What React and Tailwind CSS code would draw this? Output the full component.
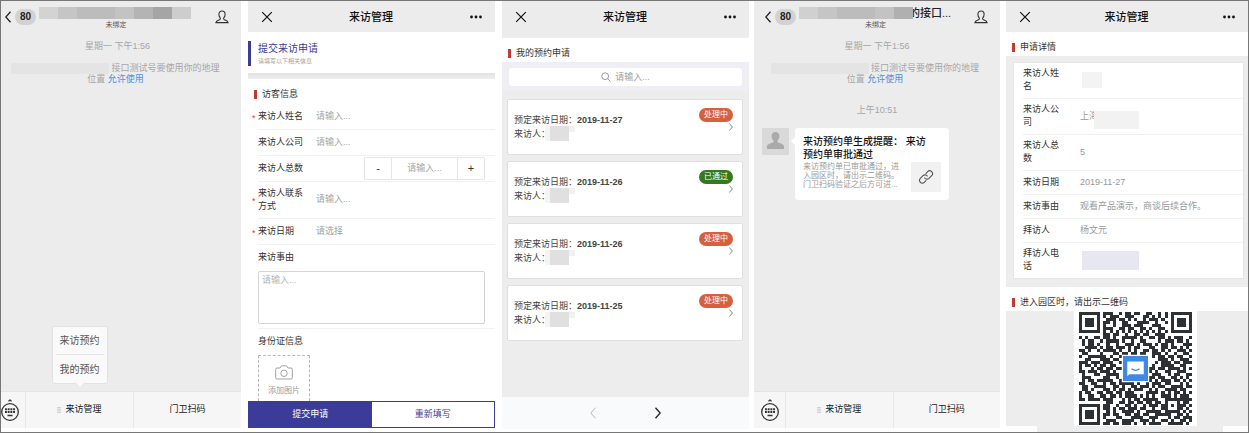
import React from "react";

const QR_ROWS = [
  "00E5B32D00", "00B9C6A900", "0076A5D300", "00D31E4A00", "0093B8E500", "00E6CD3200", "00AAAAAA00", "00D9367200",
  "A6D3E9B5C8", "5B7A4C2ED0", "5A49D75A38", "3D6EB19B50", "D2F4A6D4E8", "631B6CE930", "9DA4E2B6C8", "33D9063A70",
  "ECE7025DB8", "B5B2009E60", "896E03B7A8", "DDD3014CE0", "467A02E598", "72C903B350", "59E6A95DA8", "CCB7D2EC50",
  "659A6EB3D8", "6AD6B94F60", "B36DC3D5A8", "99B5EA9D70", "DCE2B7CAF8", "0066DB6A30", "00C9A5D7E8", "00D6EC9B50",
  "0053D3E6A8", "00D9B67CD0", "008C79C5B8", "0073CE9A68", "00DBA5E7D0",
];

function finderModule(x, y) {
  const ring = Math.max(Math.abs(x - 3), Math.abs(y - 3));
  return ring === 3 || ring <= 1;
}

function moduleOn(x, y) {
  if (x < 8 && y < 8) return x < 7 && y < 7 && finderModule(x, y);
  if (x > 28 && y < 8) return x > 29 && y < 7 && finderModule(x - 30, y);
  if (x < 8 && y > 28) return x < 7 && y > 29 && finderModule(x, y - 30);
  if (y === 6) return x % 2 === 0;
  if (x === 6) return y % 2 === 0;
  const a = Math.max(Math.abs(x - 30), Math.abs(y - 30));
  if (a <= 2) return a !== 1;
  const digit = parseInt(QR_ROWS[y][x >> 2], 16);
  return ((digit >> (3 - (x & 3))) & 1) === 1;
}

function QrCode() {
  let d = "";
  for (let y = 0; y < 37; y++) {
    for (let x = 0; x < 37; x++) if (moduleOn(x, y)) d += `M${x} ${y}h1v1h-1z`;
  }
  return (
    <svg viewBox="0 0 37 37" className="block w-[113px]" role="img" aria-label="二维码">
      <path d={d} fill="#2e3133" shapeRendering="crispEdges" />
      <rect x="14" y="14" width="9" height="9" fill="#fff" />
      <rect x="14.4" y="14.4" width="8.2" height="8.2" fill="#3f88e4" />
      <path d="M15.8 16.2h5.4v4.2h-4.7l-.7.6z" fill="#fff" />
      <path d="M17.2 18.6q1.3 1 2.6 0" fill="none" stroke="#3f88e4" strokeWidth=".45" />
    </svg>
  );
}

function Chevron({ left, className }) {
  return (
    <svg viewBox="0 0 6 12" fill="none" stroke="currentColor" className={className} aria-hidden="true">
      <path d={left ? "M5.5.7.8 6l4.7 5.3" : "M.5.7 5.2 6 .5 11.3"} />
    </svg>
  );
}

function Mosaic({ colors }) {
  return (
    <span className="relative z-10 flex h-3">
      {colors.map((c, i) => (
        <span key={i} className="w-[19px]" style={{ backgroundColor: c }} />
      ))}
    </span>
  );
}

function ChatHeader({ colors, title }) {
  return (
    <header className="flex h-8 items-start pl-[11px] pr-3 text-[#222]">
      <button aria-label="返回" className="mt-[10px]">
        <Chevron left className="h-3 w-[6px] stroke-[1.3px]" />
      </button>
      <span className="ml-1 mt-2 h-4 w-[21px] rounded-full bg-[#d2d2d2] text-center text-[10px] font-bold leading-4">80</span>
      <div className="ml-[3px] flex-1">
        <div className="flex h-[19px] items-center pt-[5px]">
          <Mosaic colors={colors} />
          {title && <h2 className="-ml-1 whitespace-nowrap text-[11px] font-medium leading-3">{title}</h2>}
        </div>
        <p className="mr-[22px] text-center text-[7px] leading-[9px] text-[#555]">未绑定</p>
      </div>
      <button aria-label="公众号资料" className="mt-[9px]">
        <svg viewBox="0 0 14 14" className="size-[14px]" fill="none" stroke="#333" strokeWidth="1.1">
          <path d="M5.4 8.2C4.4 7.2 3.9 5.700 3.9 4.200 3.900 2.200 5.200 1 7 1s3.100 1.200 3.100 3.200c0 1.500-.5 3-1.500 4-.2 1 .3 1.400 1.300 1.800 1.600.6 2.900 1 3.200 2.600H.9C1.200 11 2.500 10.600 4.100 10c1-.4 1.500-.8 1.300-1.800z" />
        </svg>
      </button>
    </header>
  );
}

function LocationNotice() {
  return (
    <div className="text-center text-[9px] text-[#a6a6a6]">
      <p className="mt-[7px] leading-3">星期一 下午1:56</p>
      <p className="mt-[11px] whitespace-nowrap pr-1 leading-[11px]">
        <span className="mr-[2px] inline-block h-[11px] w-[98px] bg-[#e4e4e4] align-top" />
        接口测试号要使用你的地理
        <br />
        位置 <a href="#allow" className="text-[#4a8fe0]">允许使用</a>
      </p>
    </div>
  );
}

function ChatFooter({ menuOpen }) {
  return (
    <footer className="mt-auto flex h-[37px] border-t border-[#e4e4e4] bg-[#f6f6f6] text-[9px] text-[#222]">
      <button aria-label="键盘" className="flex w-8 items-center justify-center border-r border-[#e8e8e8]">
        <svg viewBox="0 0 20 24" className="h-6 w-5" fill="none" stroke="#333">
          <circle cx="10" cy="14" r="8.300" strokeWidth="1.3" />
          <path d="M8.300 3 10 1.500 11.700 3z" fill="#333" strokeWidth=".6" />
          <path d="M5 11.300h10M5 14h10" strokeWidth="1.900" strokeDasharray="1.900 .8" />
          <path d="M7.500 17.500h5" strokeWidth="1.500" />
        </svg>
      </button>
      <div className="relative flex flex-1 border-r border-[#e8e8e8]">
        <button className="flex flex-1 items-center justify-center gap-1">
          <svg viewBox="0 0 4 6" className="h-[6px] w-1" stroke="#aaa" strokeWidth=".7">
            <path d="M0 .8h4M0 3h4M0 5.200h4" />
          </svg>
          来访管理
        </button>
        {menuOpen && (
          <div className="absolute bottom-full left-1/2 mb-2 w-14 -translate-x-1/2 rounded-[3px] border border-[#e2e2e2] bg-[#fafafa] px-[3px] text-[10px] text-[#555]">
            <button className="block h-7 w-full border-b border-[#e4e4e4]">来访预约</button>
            <button className="block h-7 w-full">我的预约</button>
            <svg viewBox="0 0 8 5" className="absolute left-1/2 top-full h-[5px] w-2 -translate-x-1/2">
              <path d="M0 0h8L4 4z" fill="#fafafa" />
            </svg>
          </div>
        )}
      </div>
      <button className="flex-1">门卫扫码</button>
    </footer>
  );
}

function PageHeader() {
  return (
    <header className="flex h-[31px] items-center justify-between bg-[#ececec] pl-[13px] pr-3 pt-[1px] text-[#111]">
      <button aria-label="关闭">
        <svg viewBox="0 0 12 12" className="size-3" stroke="currentColor" strokeWidth="1.2">
          <path d="m1.200 1.200 9.600 9.600M10.800 1.200l-9.600 9.600" />
        </svg>
      </button>
      <h2 className="text-[11px] font-medium">来访管理</h2>
      <button aria-label="更多">
        <svg viewBox="0 0 14 12" className="h-3 w-[14px]" fill="currentColor">
          <circle cx="2.500" cy="6" r="1.400" />
          <circle cx="7" cy="6" r="1.400" />
          <circle cx="11.500" cy="6" r="1.400" />
        </svg>
      </button>
    </header>
  );
}

function SectionTitle({ children }) {
  return (
    <h3 className="flex h-6 items-center gap-[5px] bg-white pl-[6px] pt-[6px] text-[9px] leading-3 text-[#333]">
      <span className="h-[9px] w-[3px] bg-[#c03a34]" />
      {children}
    </h3>
  );
}

function FormRow({ id, label, required, tall, children }) {
  return (
    <div className={`ml-[10px] flex items-center border-b border-[#f1f1f1] ${tall ? "h-[37px]" : "h-[26px]"}`}>
      <label htmlFor={id} className="relative w-[58px] pr-3 leading-[13px]">
        {required && <span className="absolute -left-[6px] top-1/2 -translate-y-1/2 pt-[2px] text-[#e8392f]">*</span>}
        {label}
      </label>
      {children}
    </div>
  );
}

const INPUT = "min-w-0 flex-1 bg-transparent outline-none placeholder:text-[#a6a6a6]";

function RequestForm() {
  return (
    <form className="flex flex-1 flex-col" onSubmit={(e) => e.preventDefault()}>
      <div className="mt-[9px] flex h-[25px] border-l-[3px] border-[#3b3c97] pl-[7px]">
        <div>
          <h3 className="text-[10px] leading-4 text-[#3b3c97]">提交来访申请</h3>
          <p className="text-[6px] leading-[8px] text-[#a0a0a0]">请填写以下相关信息</p>
        </div>
      </div>
      <div className="mt-[7px] h-[6px] bg-linear-to-b from-[#e2e2e2] to-[#eeeeee]" />
      <SectionTitle>访客信息</SectionTitle>
      <div className="pt-[1px] text-[9px] text-[#333]">
        <FormRow id="name" label="来访人姓名" required>
          <input id="name" className={INPUT} placeholder="请输入..." />
        </FormRow>
        <FormRow id="company" label="来访人公司">
          <input id="company" className={INPUT} placeholder="请输入..." />
        </FormRow>
        <FormRow id="count" label="来访人总数">
          <div className="ml-auto mr-[10px] flex h-[23px] w-[121px] rounded-[1px] border border-[#e6e6e6]">
            <button type="button" aria-label="减少" className="w-[27px] border-r border-[#e6e6e6] text-[11px]">-</button>
            <input id="count" className={`${INPUT} text-center`} placeholder="请输入..." />
            <button type="button" aria-label="增加" className="w-[27px] border-l border-[#e6e6e6] text-[11px]">+</button>
          </div>
        </FormRow>
        <FormRow id="phone" label="来访人联系方式" required tall>
          <input id="phone" className={INPUT} placeholder="请输入..." />
        </FormRow>
        <FormRow id="date" label="来访日期" required>
          <select id="date" className="flex-1 appearance-none bg-transparent text-[#a0a0a0] outline-none">
            <option>请选择</option>
          </select>
        </FormRow>
        <div className="ml-[10px] border-b border-[#f1f1f1] pb-1">
          <label htmlFor="reason" className="flex h-[26px] items-center">来访事由</label>
          <div className="pr-[10px]">
            <textarea
              id="reason"
              placeholder="请输入..."
              className="block h-[53px] w-full resize-none rounded-[2px] border border-[#d4d4d4] px-[3px] py-[2px] leading-[13px] outline-none placeholder:text-[#b4b4b4]"
            />
          </div>
        </div>
        <h4 className="ml-[10px] flex h-[26px] items-center">身份证信息</h4>
        <button
          type="button"
          className="ml-[10px] flex h-[46px] w-[52px] flex-col items-center gap-[6px] border border-b-0 border-dashed border-[#b8b8b8] pt-[9px] text-[8px] leading-[10px] text-[#999]"
        >
          <svg viewBox="0 0 18 15" className="h-[15px] w-[18px]" fill="none" stroke="#999" strokeWidth=".9">
            <path d="M2 3h3l1.500-2.200h5L13 3h3q1.300 0 1.300 1.300v8.400Q17.300 14 16 14H2Q.7 14 .7 12.700V4.300Q.7 3 2 3z" />
            <circle cx="9" cy="8.300" r="3.200" />
          </svg>
          添加图片
        </button>
      </div>
      <div className="mt-auto flex h-[27px] border border-[#3b3c97] text-[9px]">
        <button type="submit" className="flex-1 bg-[#3b3c97] text-white">提交申请</button>
        <button type="reset" className="flex-1 text-[#3b3c97]">重新填写</button>
      </div>
    </form>
  );
}

const BOOKINGS = [
  { date: "2019-11-27", done: false },
  { date: "2019-11-26", done: true },
  { date: "2019-11-26", done: false },
  { date: "2019-11-25", done: false },
];

function BookingCard({ date, done }) {
  return (
    <li>
      <a href="#detail" className="flex h-14 justify-between rounded-[2px] border border-[#dfdfdf] bg-white pl-[6px] pr-[9px]">
        <div className="pt-[13px] text-[9px] leading-[14px] text-[#444]">
          <p>
            预定来访日期：<strong>{date}</strong>
          </p>
          <p className="flex">
            来访人：
            <span className="-mt-[1px] -ml-[5px] h-[15px] w-[5px] bg-[#f4f4f4]" />
            <span className="-mt-[1px] h-[15px] w-[19px] bg-[#e0e0e0]" />
            <span className="-mt-[1px] h-[6px] w-[6px] bg-[#f1f1f1]" />
          </p>
        </div>
        <div className="flex flex-col items-end pt-2">
          <span className={`h-[14px] w-[34px] rounded-full text-center text-[8px] leading-[14px] text-white ${done ? "bg-[#35791f]" : "bg-[#d4603f]"}`}>
            {done ? "已通过" : "处理中"}
          </span>
          <Chevron className="mt-[1px] h-2 w-1 text-[#888] stroke-[1.5px]" />
        </div>
      </a>
    </li>
  );
}

const DETAILS = [
  ["来访人姓名", <span className="ml-[2px] block h-4 w-5 bg-[#f3f3f3]" />],
  ["来访人公司", <span className="flex items-center">上海<span className="-ml-1 mt-2 h-[18px] w-[45px] bg-[#f2f2f2]" /></span>],
  ["来访人总数", "5"],
  ["来访日期", "2019-11-27"],
  ["来访事由", "观看产品演示，商谈后续合作。"],
  ["拜访人", "杨文元"],
  ["拜访人电话", <span className="ml-[2px] block h-[19px] w-[57px] bg-[#e7e7f2]" />],
];

function Details() {
  return (
    <dl className="mb-2 ml-[7px] mr-1 mt-[6px] border border-[#e6e6e6] bg-white pl-[9px] text-[9px] leading-[13px]">
      {DETAILS.map(([label, value]) => (
        <div key={label} className="flex min-h-6 items-center border-b border-[#f0f0f0] pb-[5px] pt-1 last:border-b-0">
          <dt className="w-[57px] pr-5 text-[#333]">{label}</dt>
          <dd className="-my-1 flex-1 text-[#999]">{value}</dd>
        </div>
      ))}
    </dl>
  );
}

export default function App() {
  return (
    <main className='flex min-h-screen border border-[#777] bg-white font-["Liberation_Sans","Noto_Sans_CJK_SC",sans-serif]'>
      <section className="mb-1 flex min-w-0 flex-[240] overflow-hidden bg-[#ececec]">
        <div className="-ml-[7px] flex flex-1 flex-col">
          <ChatHeader colors={["#d3d3d3", "#c5c5c5", "#bcbcbc", "#bcbcbc", "#c3c3c3", "#b4b4b4", "#a5a5a5", "#cdcdcd"]} />
          <LocationNotice />
          <ChatFooter menuOpen />
        </div>
      </section>

      <section className="mb-1 ml-[7px] flex min-w-0 flex-[247] flex-col">
        <PageHeader />
        <RequestForm />
      </section>

      <section className="mb-[3px] ml-[7px] flex min-w-0 flex-[247] flex-col bg-[#ededed]">
        <PageHeader />
        <div className="mt-[6px]">
          <SectionTitle>我的预约申请</SectionTitle>
        </div>
        <div className="bg-[#eeeef4] px-[7px] pb-[5px] pt-[6px]">
          <label className="flex h-[18px] items-center justify-center gap-1 rounded-[3px] bg-white text-[9px]">
            <svg viewBox="0 0 10 10" className="size-[10px]" fill="none" stroke="#999">
              <circle cx="4.200" cy="4.200" r="3.400" />
              <path d="m6.800 6.800 2.600 2.600" />
            </svg>
            <input type="search" aria-label="搜索" placeholder="请输入..." className="field-sizing-content outline-none placeholder:text-[#a0a0a0]" />
          </label>
        </div>
        <ul className="mt-2 flex flex-col gap-[6px] pl-[5px] pr-[6px]">
          {BOOKINGS.map((b, i) => (
            <BookingCard key={i} {...b} />
          ))}
        </ul>
        <nav className="mt-auto flex h-8 items-center justify-center gap-[59px] bg-[#f9fafc]">
          <button aria-label="上一页" className="text-[#b5b5b5]">
            <Chevron left className="h-3 w-[6px]" />
          </button>
          <button aria-label="下一页" className="text-[#222]">
            <Chevron className="h-3 w-[6px] stroke-[1.3px]" />
          </button>
        </nav>
      </section>

      <section className="mb-1 ml-[5px] flex min-w-0 flex-[246] flex-col bg-[#ececec]">
        <ChatHeader colors={["#d0d0d0", "#c5c5c5", "#bcbcbc", "#bcbcbc", "#c3c3c3", "#b0b0b0"]} title="的接口..." />
        <LocationNotice />
        <p className="mt-[19px] text-center text-[9px] leading-3 text-[#a6a6a6]">上午10:51</p>
        <div className="mt-3 flex items-start pl-2">
          <svg viewBox="0 0 27 27" className="size-[27px]">
            <rect width="27" height="27" rx="1" fill="#d9d9d9" />
            <path d="M13.500 4c2.500 0 3.900 1.800 3.900 4.200 0 1.900-.8 3.500-1.900 4.400v1.500c1.200 1.100 6.500 1.700 6.500 4.500V21H5v-2.400c0-2.800 5.300-3.400 6.500-4.500v-1.500c-1.100-.9-1.900-2.500-1.900-4.400C9.600 5.800 11 4 13.500 4z" fill="#aaa" />
          </svg>
          <svg viewBox="0 0 4 8" className="ml-[2px] mt-[9px] h-2 w-1">
            <path d="M4 0v8L0 4z" fill="#fff" />
          </svg>
          <a href="#message" className="block w-[154px] rounded-[3px] bg-white px-2 pb-2 pt-[7px]">
            <h3 className="pr-[10px] text-[10px] font-medium leading-[13px] text-[#111]">来访预约单生成提醒： 来访预约单审批通过</h3>
            <div className="mt-[1px] flex justify-between">
              <p className="w-[99px] whitespace-nowrap text-[8px] leading-[9px] text-[#999]">
                来访预约单已审批通过，进
                <br />
                入园区时，请出示二维码。
                <br />
                门卫扫码验证之后方可进...
              </p>
              <span className="flex size-[30px] items-center justify-center bg-[#f1f1f1]">
                <svg viewBox="0 0 24 24" className="size-4" fill="none" stroke="#555" strokeWidth="1.700" strokeLinecap="round">
                  <path d="M10 13.500a4.500 4.500 0 0 0 6.500.5l4-4a4.200 4.200 0 0 0-6-6l-2.500 2.500" />
                  <path d="M14 10.500a4.500 4.500 0 0 0-6.500-.5l-4 4a4.200 4.200 0 0 0 6 6l2.500-2.500" />
                </svg>
              </span>
            </div>
          </a>
        </div>
        <ChatFooter />
      </section>

      <section className="ml-[6px] flex min-w-0 flex-[242] flex-col bg-[#ededed]">
        <PageHeader />
        <SectionTitle>申请详情</SectionTitle>
        <Details />
        <SectionTitle>进入园区时，请出示二维码</SectionTitle>
        <div className="ml-[68px] self-start bg-white px-[5px] py-[1px]">
          <QrCode />
        </div>
        <div className="mt-auto flex h-[6px] justify-between">
          <span className="w-[31px] bg-white" />
          <span className="w-[25px] bg-white" />
        </div>
      </section>
    </main>
  );
}
